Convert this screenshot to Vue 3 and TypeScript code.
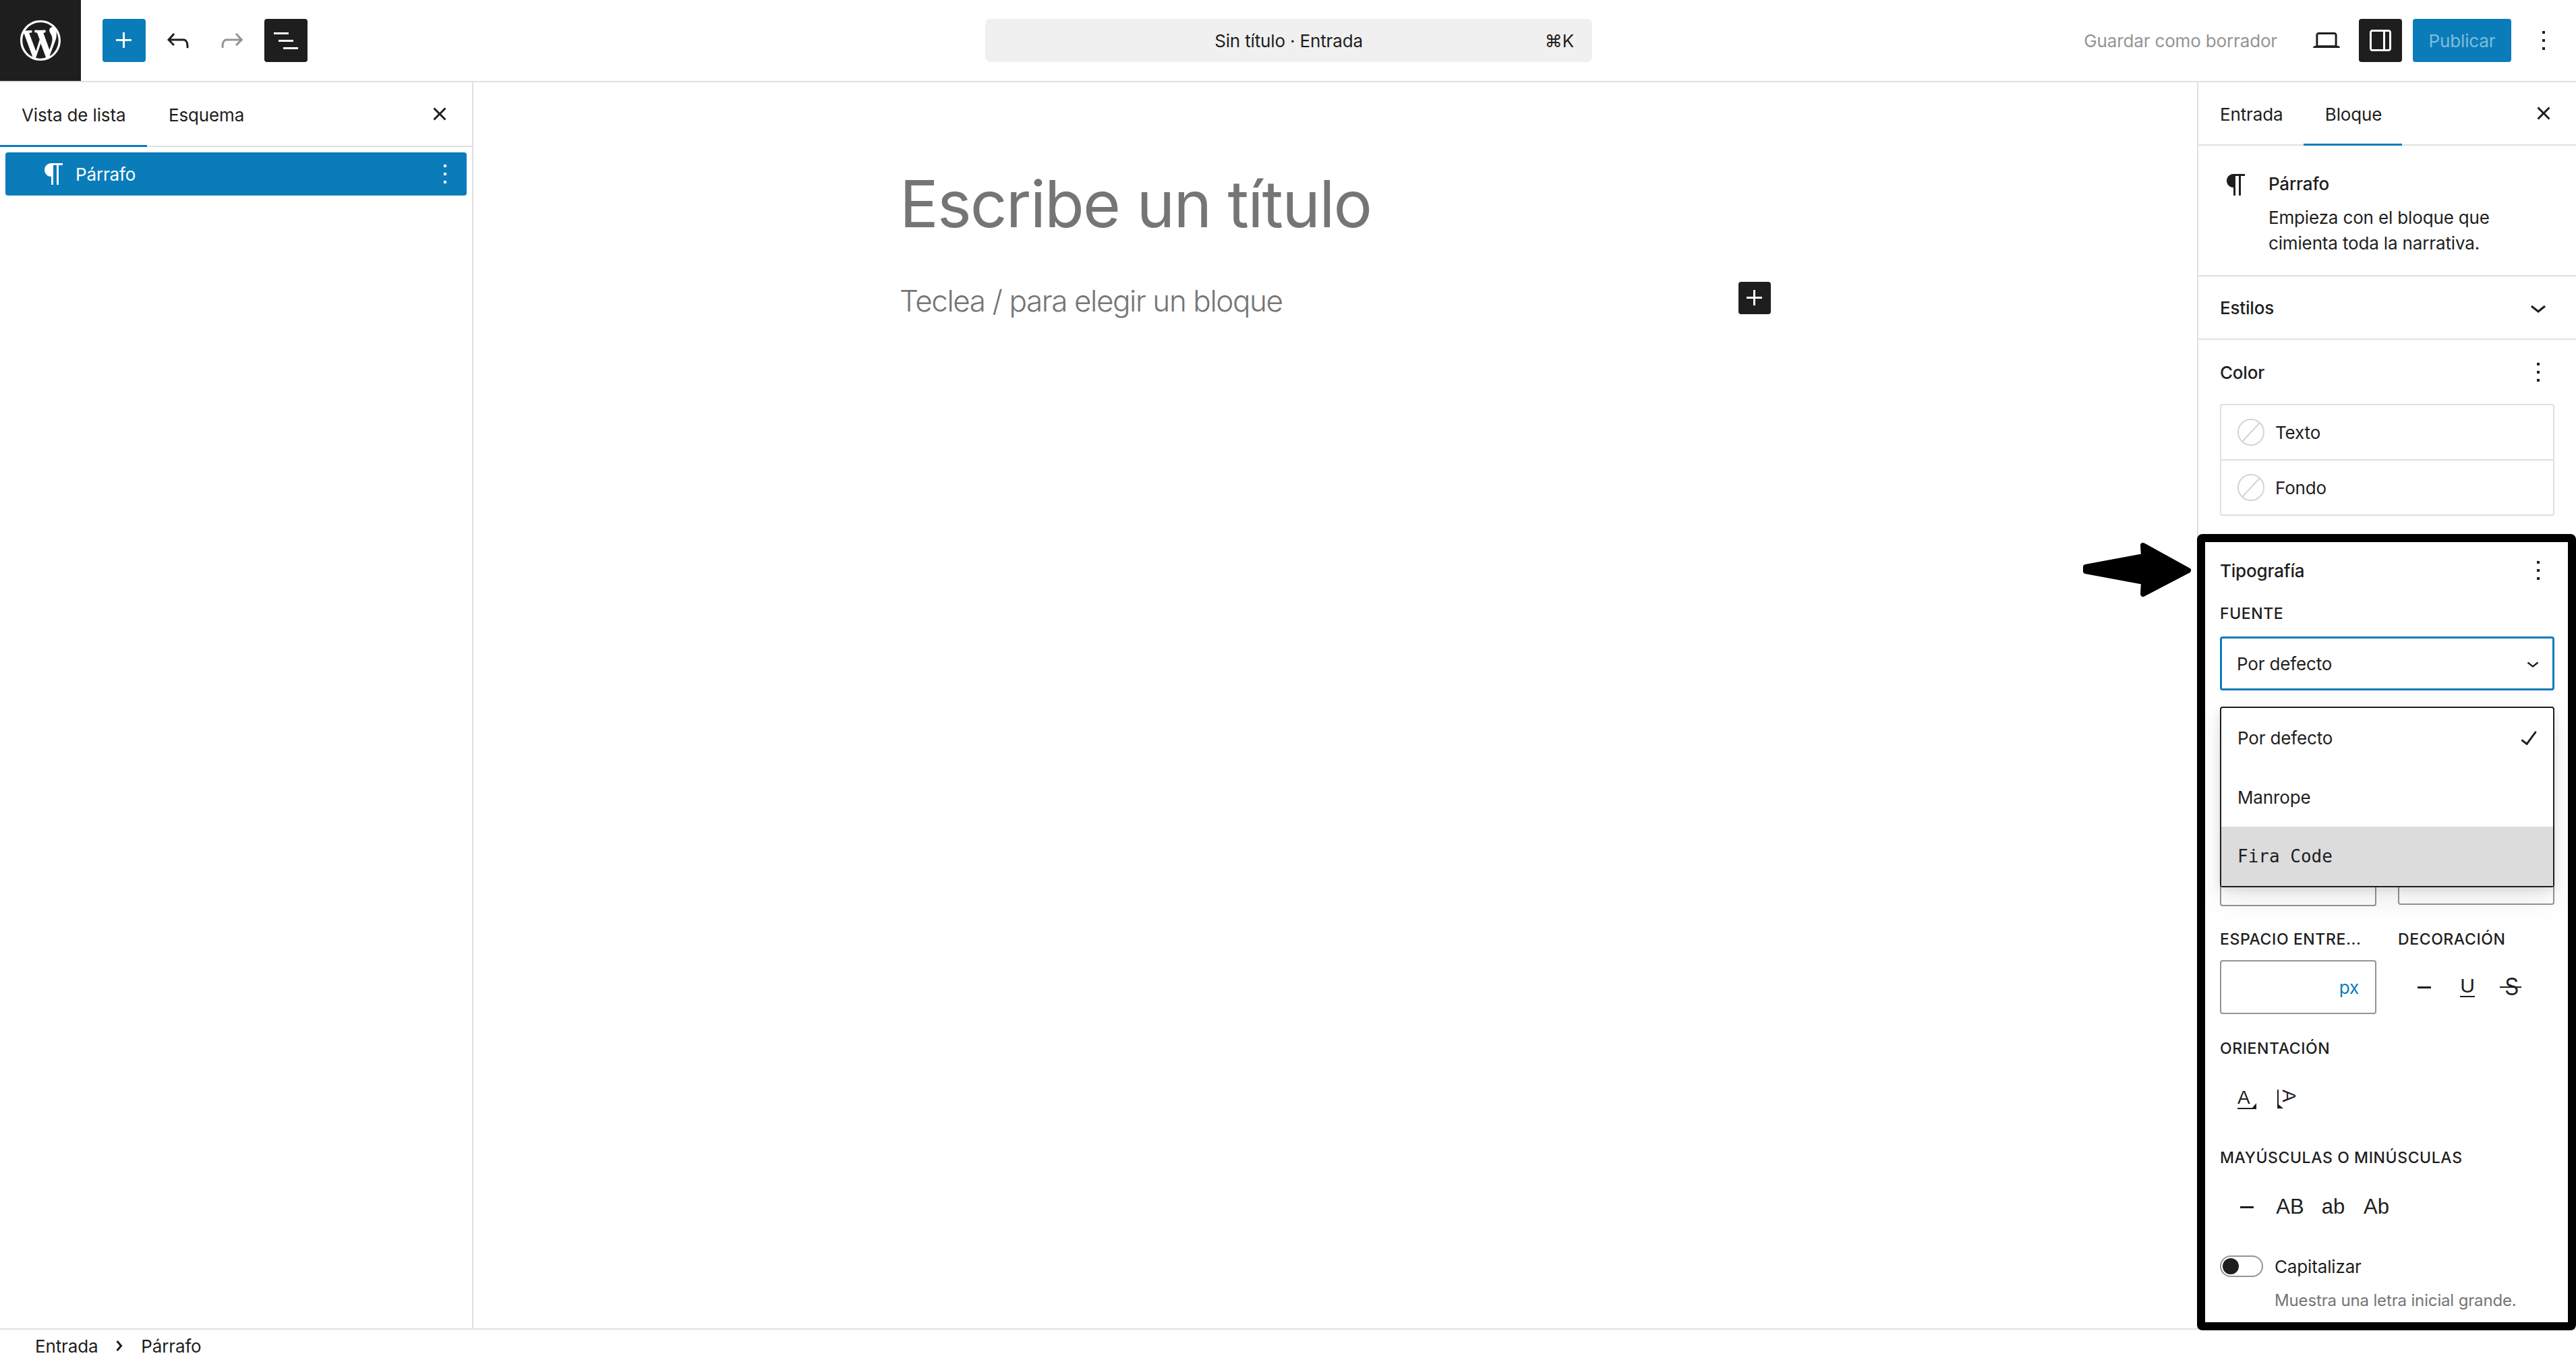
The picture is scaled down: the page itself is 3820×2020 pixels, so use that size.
<script setup lang="ts">
const icons = {
  wp: 'M20 10c0-5.51-4.49-10-10-10C4.48 0 0 4.49 0 10c0 5.52 4.48 10 10 10 5.51 0 10-4.48 10-10zM7.78 15.37L4.37 6.22c.55-.02 1.17-.08 1.17-.08.5-.06.44-1.13-.06-1.11 0 0-1.45.11-2.37.11-.18 0-.37 0-.58-.01C4.12 2.69 6.87 1.11 10 1.11c2.33 0 4.45.87 6.05 2.34-.68-.11-1.65.39-1.65 1.58 0 .74.45 1.36.9 2.1.35.61.55 1.36.55 2.46 0 1.49-1.4 5-1.4 5l-3.03-8.37c.54-.02.82-.17.82-.17.5-.05.44-1.25-.06-1.22 0 0-1.44.12-2.38.12-.87 0-2.33-.12-2.33-.12-.5-.03-.56 1.2-.06 1.22l.92.08 1.26 3.41zM17.41 10c.24-.64.74-1.87.43-4.25.7 1.29 1.05 2.71 1.05 4.25 0 3.29-1.73 6.24-4.4 7.78.97-2.59 1.94-5.2 2.92-7.78zM6.1 18.09C3.12 16.65 1.11 13.53 1.11 10c0-1.3.23-2.48.72-3.59C3.25 10.3 4.67 14.2 6.1 18.09zm4.03-6.63l2.58 6.98c-.86.29-1.76.45-2.71.45-.79 0-1.57-.11-2.29-.33.81-2.38 1.62-4.74 2.42-7.1z',
  plus: 'M11 12.5V17.5H12.5V12.5H17.5V11H12.5V6H11V11H6V12.5H11Z',
  undo: 'M18.3 11.7c-.6-.6-1.4-.9-2.3-.9H6.7l2.9-3.3-1.1-1-4.5 5L8.5 16l1-1-2.7-2.7H16c.5 0 .9.2 1.3.5 1 1 1 3.4 1 4.5v.3h1.5v-.2c0-1.5 0-4.3-1.5-5.7z',
  redo: 'M15.6 6.5l-1.1 1 2.9 3.3H8c-.9 0-1.7.3-2.3.9-1.4 1.5-1.4 4.2-1.4 5.6v.2h1.5v-.3c0-1.1 0-3.5 1-4.5.3-.3.7-.5 1.3-.5h9.2L14.5 15l1.1 1.1 4.6-4.6-4.6-5z',
  listView: 'M3 6h11v1.5H3V6Zm3.5 5.5h11V13h-11v-1.5ZM21 17H10v1.5h11V17Z',
  close: 'M12 13.06l3.712 3.713 1.061-1.06L13.061 12l3.712-3.712-1.06-1.06L12 10.938 8.288 7.227l-1.061 1.06L10.939 12l-3.712 3.712 1.06 1.061L12 13.061z',
  more: 'M13 19h-2v-2h2v2zm0-6h-2v-2h2v2zm0-6h-2V5h2v2z',
  paragraph: 'm9.99609 14v-.2251l.00391.0001v6.225h1.5v-14.5h2.5v14.5h1.5v-14.5h3v-1.5h-8.50391c-2.76142 0-5 2.23858-5 5 0 2.7614 2.23858 5 5 5z',
  chevronDown: 'M17.5 11.6L12 16l-5.5-4.4.9-1.2L12 14l4.5-3.6 1 1.2z',
  check: 'M16.7 7.1l-6.3 8.5-3.3-2.5-.9 1.2 4.5 3.4L17.9 7.9z',
  chevronRight: 'M10.8622 8.04053L14.2805 12.0286L10.8622 16.0167L9.72327 15.0405L12.3049 12.0286L9.72327 9.01672L10.8622 8.04053Z',
  desktop: 'M20.5 16h-.7V8c0-1.1-.9-2-2-2H6.2c-1.1 0-2 .9-2 2v8h-.7c-.8 0-1.5.7-1.5 1.5h20c0-.8-.7-1.5-1.5-1.5zM5.7 8c0-.3.2-.5.5-.5h11.6c.3 0 .5.2.5.5v7.6H5.7V8z',
  drawer: 'M18 4H6c-1.1 0-2 .9-2 2v12c0 1.1.9 2 2 2h12c1.1 0 2-.9 2-2V6c0-1.1-.9-2-2-2zm-4 14.5H6c-.3 0-.5-.2-.5-.5V6c0-.3.2-.5.5-.5h8v13zm4.5-.5c0 .3-.2.5-.5.5h-2.5v-13H18c.3 0 .5.2.5.5v12z',
  reset: 'M7 11.5h10V13H7z'
}

const colorRows = ['Texto', 'Fondo']
const fontOptions = [
  { label: 'Por defecto', selected: true, mono: false },
  { label: 'Manrope', selected: false, mono: false },
  { label: 'Fira Code', selected: false, mono: true }
]
const caseOptions = ['AB', 'ab', 'Ab']
</script>

<template>
  <div class="page">
    <header class="topbar">
      <div class="logo">
        <svg viewBox="0 0 20 20" width="60" height="60"><path :d="icons.wp" fill="#fff" /></svg>
      </div>
      <div class="tools">
        <button class="btn btn--blue"><svg class="ico" viewBox="0 0 24 24"><path :d="icons.plus" /></svg></button>
        <button class="btn"><svg class="ico" viewBox="0 0 24 24"><path :d="icons.undo" /></svg></button>
        <button class="btn btn--muted"><svg class="ico" viewBox="0 0 24 24"><path :d="icons.redo" /></svg></button>
        <button class="btn btn--dark"><svg class="ico" viewBox="0 0 24 24"><path :d="icons.listView" /></svg></button>
      </div>
      <div class="command">
        <span class="command__title">Sin título · Entrada</span>
        <span class="command__key">⌘K</span>
      </div>
      <div class="actions">
        <span class="save">Guardar como borrador</span>
        <button class="btn"><svg class="ico" viewBox="0 0 24 24"><path :d="icons.desktop" /></svg></button>
        <button class="btn btn--dark"><svg class="ico" viewBox="0 0 24 24"><path :d="icons.drawer" /></svg></button>
        <button class="publish">Publicar</button>
        <button class="btn"><svg class="ico" viewBox="0 0 24 24"><path :d="icons.more" /></svg></button>
      </div>
    </header>

    <main class="body">
      <aside class="left">
        <div class="tabs">
          <span class="tab tab--active tab--list">Vista de lista</span>
          <span class="tab tab--list">Esquema</span>
          <button class="btn tabs__close"><svg class="ico" viewBox="0 0 24 24"><path :d="icons.close" /></svg></button>
        </div>
        <div class="list-row">
          <svg class="ico" viewBox="0 0 24 24"><path :d="icons.paragraph" /></svg>
          <span class="list-row__name">Párrafo</span>
          <svg class="ico list-row__more" viewBox="0 0 24 24"><path :d="icons.more" /></svg>
        </div>
      </aside>

      <section class="canvas">
        <div class="canvas__inner">
          <h1 class="title">Escribe un título</h1>
          <div class="para-row">
            <p class="para">Teclea / para elegir un bloque</p>
            <button class="add"><svg class="ico" viewBox="0 0 24 24"><path :d="icons.plus" /></svg></button>
          </div>
        </div>
      </section>

      <aside class="right">
        <div class="tabs tabs--right">
          <span class="tab tab--entry">Entrada</span>
          <span class="tab tab--active tab--block">Bloque</span>
          <button class="btn tabs__close"><svg class="ico" viewBox="0 0 24 24"><path :d="icons.close" /></svg></button>
        </div>

        <div class="card">
          <svg class="ico" viewBox="0 0 24 24"><path :d="icons.paragraph" /></svg>
          <div>
            <div class="card__name">Párrafo</div>
            <div class="card__desc">Empieza con el bloque que cimienta toda la narrativa.</div>
          </div>
        </div>

        <div class="panel-row">
          <span class="heading">Estilos</span>
          <svg class="ico" viewBox="0 0 24 24"><path :d="icons.chevronDown" /></svg>
        </div>

        <div class="settings">
          <div class="settings__head">
            <span class="heading">Color</span>
            <svg class="ico" viewBox="0 0 24 24"><path :d="icons.more" /></svg>
          </div>
          <div class="colors">
            <div v-for="row in colorRows" :key="row" class="colors__row">
              <svg width="40" height="40" viewBox="0 0 40 40">
                <circle cx="20" cy="20" r="19" fill="none" stroke="#d4d4d4" stroke-width="2" />
                <line x1="7" y1="34" x2="33" y2="6" stroke="#d4d4d4" stroke-width="2" />
              </svg>
              <span>{{ row }}</span>
            </div>
          </div>

          <div class="settings__head settings__head--type">
            <span class="heading">Tipografía</span>
            <svg class="ico" viewBox="0 0 24 24"><path :d="icons.more" /></svg>
          </div>
          <div class="label label--font">Fuente</div>
          <div class="select-wrap">
            <div class="select">
              <span>Por defecto</span>
              <svg width="36" height="36" viewBox="0 0 24 24"><path :d="icons.chevronDown" fill="#1e1e1e" /></svg>
            </div>
            <ul class="dropdown">
              <li
                v-for="opt in fontOptions"
                :key="opt.label"
                class="dropdown__item"
                :class="{ 'dropdown__item--mono': opt.mono }"
              >
                <span>{{ opt.label }}</span>
                <svg v-if="opt.selected" class="ico" viewBox="0 0 24 24"><path :d="icons.check" /></svg>
              </li>
            </ul>
          </div>

          <div class="two-col two-col--hidden">
            <div class="input input--under"></div>
            <div class="input input--under input--short"></div>
          </div>

          <div class="two-col two-col--labels">
            <div class="label">Espacio entre...</div>
            <div class="label">Decoración</div>
          </div>
          <div class="two-col two-col--fields">
            <div class="input input--px"><span class="unit">px</span></div>
            <div class="glyphs glyphs--deco">
              <span class="glyph"><svg class="ico" viewBox="0 0 24 24"><path :d="icons.reset" /></svg></span>
              <span class="glyph"><span class="deco-u">U</span></span>
              <span class="glyph"><span class="deco-s"><span class="deco-s__letter">S</span></span></span>
            </div>
          </div>

          <div class="label label--orient">Orientación</div>
          <div class="glyphs glyphs--orient">
            <span class="glyph glyph--narrow">
              <span class="orient orient--h">A</span>
            </span>
            <span class="glyph glyph--narrow">
              <span class="orient orient--v">A</span>
            </span>
          </div>

          <div class="label label--case">Mayúsculas o minúsculas</div>
          <div class="glyphs glyphs--case">
            <span class="glyph"><svg class="ico" viewBox="0 0 24 24"><path :d="icons.reset" /></svg></span>
            <span v-for="c in caseOptions" :key="c" class="glyph case-text">{{ c }}</span>
          </div>

          <div class="toggle-row">
            <span class="toggle"><span class="toggle__knob"></span></span>
            <span>Capitalizar</span>
          </div>
          <div class="help">Muestra una letra inicial grande.</div>
        </div>
      </aside>
    </main>

    <footer class="crumbs">
      <span>Entrada</span>
      <svg width="48" height="48" viewBox="0 0 24 24"><path :d="icons.chevronRight" fill="#1e1e1e" /></svg>
      <span>Párrafo</span>
    </footer>

    <!-- annotation drawn on top of the screenshot -->
    <div class="frame"></div>
    <svg class="arrow" viewBox="0 0 180 90" width="180" height="90">
      <path
        d="M6 41 L92 25 L91 9 L158 46 L91 81 L92 63 L6 47 Z"
        fill="#000"
        stroke="#000"
        stroke-width="8"
        stroke-linejoin="round"
      />
    </svg>
  </div>
</template>

<style>
html,
body {
  margin: 0;
  background: #fff;
}
</style>

<style scoped>
.page {
  position: relative;
  width: 3820px;
  height: 2020px;
  overflow: hidden;
  display: flex;
  flex-direction: column;
  background: #fff;
  color: #1e1e1e;
  font-family: Inter, "DejaVu Sans", sans-serif;
  font-size: 26px;
  letter-spacing: -0.15px;
}

button {
  font: inherit;
  letter-spacing: inherit;
  border: 0;
  padding: 0;
  background: none;
  color: inherit;
}

.ico {
  width: 48px;
  height: 48px;
  fill: currentColor;
  flex: 0 0 auto;
  display: block;
}

/* Top bar */
.topbar {
  flex: 0 0 auto;
  height: 120px;
  border-bottom: 2px solid #e0e0e0;
  display: grid;
  grid-template-columns: 120px 1341px 900px 1fr;
  align-items: center;
}

.logo {
  height: 120px;
  background: #1e1e1e;
  display: flex;
  align-items: center;
  justify-content: center;
}

.tools {
  display: flex;
  gap: 16px;
  margin-left: 32px;
}

.btn {
  width: 64px;
  height: 64px;
  border-radius: 4px;
  display: flex;
  align-items: center;
  justify-content: center;
  color: #1e1e1e;
}

.btn--blue {
  background: #0a7cba;
  color: #fff;
}

.btn--muted {
  color: #949494;
}

.btn--dark {
  background: #1e1e1e;
  color: #fff;
}

.command {
  height: 64px;
  border-radius: 8px;
  background: #f0f0f0;
  display: grid;
  grid-template-columns: 1fr auto 1fr;
  align-items: center;
  padding: 0 27px;
}

.command__title {
  grid-column: 2;
}

.command__key {
  grid-column: 3;
  justify-self: end;
}

.actions {
  display: flex;
  align-items: center;
  justify-content: flex-end;
  gap: 16px;
  padding-right: 16px;
}

.save {
  color: #949494;
  margin-right: 25px;
}

.publish {
  width: 146px;
  height: 64px;
  border-radius: 4px;
  background: #0a7cba;
  color: #7fbcdd;
}

/* Main columns */
.body {
  flex: 1;
  min-height: 0;
  display: flex;
}

.left {
  flex: 0 0 702px;
  box-sizing: border-box;
  border-right: 2px solid #e0e0e0;
}

.canvas {
  flex: 1;
  min-width: 0;
}

.right {
  flex: 0 0 562px;
  box-sizing: border-box;
  border-left: 2px solid #e0e0e0;
}

.tabs {
  height: 96px;
  box-sizing: border-box;
  border-bottom: 2px solid #e0e0e0;
  display: flex;
  align-items: center;
}

.tabs--right {
  height: 94px;
}

.tab {
  box-sizing: border-box;
  height: 100%;
  display: flex;
  align-items: center;
  justify-content: center;
  padding: 0 0 0 32px;
}

.tabs .tab {
  height: calc(100% + 2px);
  margin-bottom: -2px;
}

.tab--list {
  width: 218px;
  justify-content: flex-start;
}

.tab--list + .tab--list {
  width: auto;
}

.tab--entry {
  width: 156px;
  justify-content: flex-start;
}

.tab--block {
  width: 146px;
  padding: 0 0 0 2px;
}

.tab--active {
  box-shadow: inset 0 -3px 0 #0a7cba;
}

.tabs__close {
  margin-left: auto;
  margin-right: 16px;
}

.list-row {
  margin: 8px;
  height: 64px;
  border-radius: 4px;
  background: #0a7cba;
  color: #fff;
  display: flex;
  align-items: center;
  padding: 0 8px 0 48px;
}

.list-row__name {
  margin-left: 8px;
}

.list-row__more {
  margin-left: auto;
}

/* Canvas */
.canvas__inner {
  width: 1292px;
  margin: 0 auto;
  padding-top: 120px;
}

.title {
  margin: 0;
  font-size: 96px;
  line-height: 120px;
  font-weight: 400;
  color: #757575;
  letter-spacing: -1.8px;
}

.para-row {
  margin-top: 52px;
  display: flex;
  align-items: flex-start;
  justify-content: space-between;
}

.para {
  margin: 0;
  font-size: 44px;
  line-height: 64px;
  font-weight: 300;
  color: #757575;
  letter-spacing: -1.4px;
}

.add {
  width: 48px;
  height: 48px;
  margin-top: 4px;
  border-radius: 4px;
  background: #1e1e1e;
  color: #fff;
  display: flex;
  align-items: center;
  justify-content: center;
}

/* Block inspector */
.heading,
.card__name {
  font-weight: 450;
  letter-spacing: -0.2px;
}

.card {
  height: 192px;
  border-bottom: 2px solid #e0e0e0;
  display: flex;
  gap: 24px;
  padding-left: 32px;
  padding-right: 32px;
}

.card > .ico {
  margin-top: 34px;
}

.card__name {
  margin-top: 34px;
  line-height: 46px;
}

.card__desc {
  margin-top: 8px;
  line-height: 38px;
}

.panel-row {
  height: 92px;
  border-bottom: 2px solid #e0e0e0;
  display: flex;
  align-items: center;
  justify-content: space-between;
  padding: 0 32px;
}

.settings {
  padding: 0 32px;
}

.settings__head {
  height: 48px;
  margin-top: 24px;
  display: flex;
  align-items: center;
  justify-content: space-between;
}

.settings__head--type {
  margin-top: 57px;
}

.colors {
  margin-top: 23px;
  border: 2px solid #e0e0e0;
  border-radius: 4px;
}

.colors__row {
  height: 80px;
  display: flex;
  align-items: center;
  gap: 16px;
  padding-left: 24px;
}

.colors__row + .colors__row {
  border-top: 2px solid #e0e0e0;
}

.label {
  font-size: 23px;
  line-height: 32px;
  font-weight: 500;
  letter-spacing: 0.6px;
  text-transform: uppercase;
  white-space: nowrap;
}

.label--font {
  margin-top: 24px;
}

.select-wrap {
  position: relative;
  margin-top: 18px;
}

.select {
  height: 80px;
  box-sizing: border-box;
  border: 3px solid #0a7cba;
  border-radius: 4px;
  display: flex;
  align-items: center;
  justify-content: space-between;
  padding: 0 11px 0 22px;
}

.dropdown {
  position: absolute;
  z-index: 2;
  top: 104px;
  left: 0;
  right: 0;
  margin: 0;
  padding: 0;
  list-style: none;
  background: #fff;
  border: 2px solid #1e1e1e;
  border-radius: 4px;
  box-shadow: 0 4px 14px rgba(0, 0, 0, 0.1), 0 20px 40px rgba(0, 0, 0, 0.08);
}

.dropdown__item {
  height: 88px;
  display: flex;
  align-items: center;
  justify-content: space-between;
  padding: 0 12px 0 24px;
}

.dropdown__item--mono {
  background: #dcdcdc;
  font-family: "DejaVu Sans Mono", monospace;
  letter-spacing: 0;
}

.two-col {
  display: grid;
  grid-template-columns: 232px 232px;
  column-gap: 32px;
}

.two-col--hidden {
  margin-top: 240px;
  align-items: start;
}

.two-col--labels {
  margin-top: 33px;
}

.two-col--fields {
  margin-top: 15px;
  align-items: center;
}

.input {
  height: 80px;
  box-sizing: border-box;
  border: 2px solid #949494;
  border-radius: 4px;
}

.input--short {
  height: 78px;
}

.input--px {
  display: flex;
  align-items: center;
  justify-content: flex-end;
  padding-right: 24px;
}

.unit {
  color: #0a7cba;
}

.glyphs {
  display: flex;
}

.glyphs--deco {
  margin-left: 7px;
}

.glyphs--orient {
  margin: 27px 0 0 10px;
}

.glyphs--case {
  margin: 25px 0 0 8px;
}

.glyph {
  width: 64px;
  height: 64px;
  display: flex;
  align-items: center;
  justify-content: center;
  flex: 0 0 auto;
  font-family: "Liberation Sans", sans-serif;
  letter-spacing: 0;
}

.glyph--narrow {
  width: 60px;
}

.case-text {
  font-size: 31px;
}

.deco-u {
  font-size: 30px;
  line-height: 25px;
  border-bottom: 2px solid #1e1e1e;
  padding-bottom: 3px;
}

.deco-s {
  position: relative;
  display: block;
  width: 20px;
  height: 32px;
  line-height: 32px;
  text-align: center;
}

.deco-s__letter {
  display: block;
  font-size: 36px;
  transform: scaleX(0.85);
}

.deco-s::after {
  content: "";
  position: absolute;
  left: -6px;
  right: -6px;
  top: 15px;
  height: 2px;
  background: #1e1e1e;
}

.orient {
  position: relative;
  display: block;
  box-sizing: border-box;
  width: 28px;
  font-size: 28px;
  line-height: 26px;
  border-bottom: 2px solid #1e1e1e;
  padding-bottom: 2px;
}

.orient::after {
  content: "";
  position: absolute;
  right: 0;
  bottom: 0;
  border-left: 6px solid transparent;
  border-bottom: 7px solid #1e1e1e;
}

.orient--v {
  transform: rotate(90deg);
}

.label--orient {
  margin-top: 35px;
}

.label--case {
  margin-top: 39px;
}

.toggle-row {
  margin-top: 40px;
  display: flex;
  align-items: center;
  gap: 17px;
}

.toggle {
  box-sizing: border-box;
  width: 64px;
  height: 32px;
  border: 2px solid #949494;
  border-radius: 16px;
  display: flex;
  align-items: center;
  padding-left: 2px;
}

.toggle__knob {
  width: 24px;
  height: 24px;
  border-radius: 50%;
  background: #1e1e1e;
}

.help {
  margin-top: 19px;
  padding-left: 81px;
  font-size: 24px;
  line-height: 32px;
  color: #757575;
}

/* Breadcrumb */
.crumbs {
  flex: 0 0 auto;
  height: 48px;
  border-top: 2px solid #e0e0e0;
  display: flex;
  align-items: center;
  padding-left: 52px;
  gap: 8px;
}

/* Annotation */
.frame {
  position: absolute;
  left: 3258px;
  top: 792px;
  width: 562px;
  height: 1181px;
  box-sizing: border-box;
  border: 12px solid #000;
  border-radius: 8px;
  pointer-events: none;
}

.arrow {
  position: absolute;
  left: 3087px;
  top: 800px;
}
</style>
